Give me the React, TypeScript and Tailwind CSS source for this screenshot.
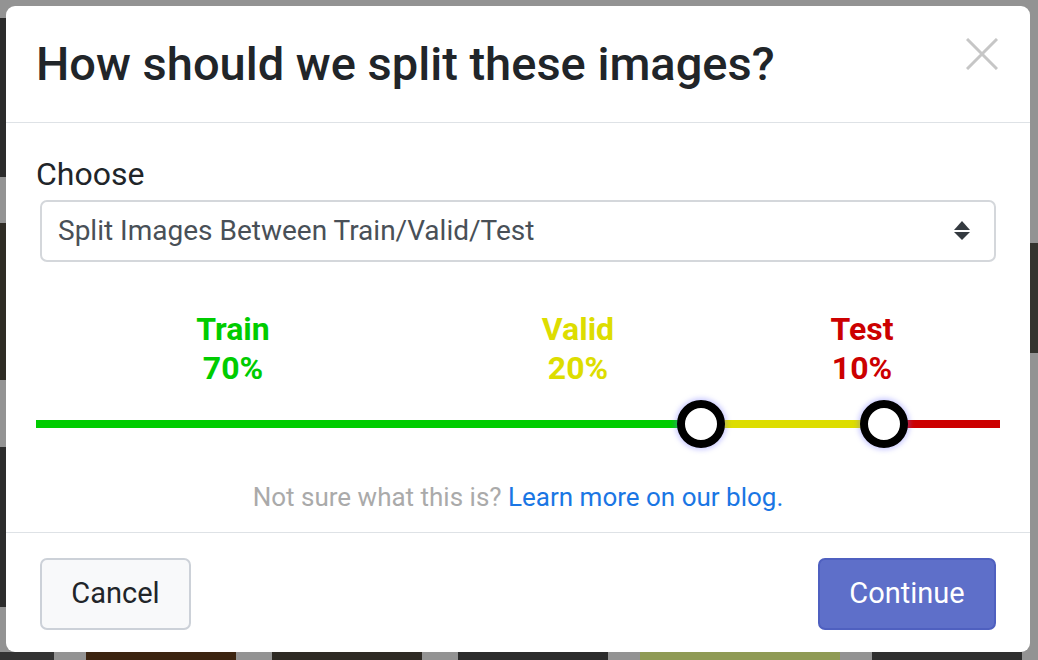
import React from "react";

const font = { fontFamily: "Roboto, 'Noto Sans', Arial, sans-serif" };

function Tile({ w, h, c, mt = 0 }: { w: number; h: number; c: string; mt?: number }) {
  return <div className="shrink-0" style={{ width: w, height: h, background: c, marginTop: mt }} />;
}

function Background() {
  return (
    <div className="flex flex-col w-full h-full">
      <div className="flex gap-[36px] pt-[18px] h-[177px] ml-[-140px]">
        <Tile w={146} h={159} c="#2b2b2b" />
        <Tile w={300} h={159} c="#3a3a3a" />
        <Tile w={300} h={159} c="#333" />
        <Tile w={300} h={159} c="#2e2e2e" />
      </div>
      <div className="flex gap-[36px] mt-[46px] h-[230px] ml-[-100px] items-start">
        <Tile w={106} h={157} c="#2f2c25" />
        <Tile w={300} h={157} c="#333" />
        <Tile w={300} h={157} c="#333" />
        <Tile w={360} h={110} c="#34332e" mt={20} />
      </div>
      <div className="flex gap-[36px] mt-[-6px] ml-[-100px] items-start">
        <Tile w={106} h={160} c="#2c2c2c" />
      </div>
      <div className="flex mt-auto h-[8px]">
        <Tile w={54} h={8} c="#333" />
        <div className="w-[32px]" />
        <Tile w={150} h={8} c="#3c2410" />
        <div className="w-[36px]" />
        <Tile w={150} h={8} c="#2e2a24" />
        <div className="w-[36px]" />
        <Tile w={150} h={8} c="#2c2c2c" />
        <div className="w-[32px]" />
        <Tile w={200} h={8} c="#8f9a55" />
        <div className="w-[32px]" />
        <Tile w={150} h={8} c="#2f2f2f" />
      </div>
    </div>
  );
}

function Handle({ left }: { left: number }) {
  return (
    <div
      className="absolute top-0 w-[48px] h-[48px] rounded-full bg-white border-[8px] border-black shadow-[0_0_5px_2px_rgba(110,110,255,0.35)]"
      style={{ left: left - 24 }}
    />
  );
}

export default function App() {
  return (
    <div className="relative w-[1038px] h-[660px] overflow-hidden bg-[#939393]" style={font}>
      <Background />
      <div className="absolute left-[6px] top-[6px] w-[1024px] h-[646px] bg-white rounded-[9px] flex flex-col">
        {/* Header */}
        <div className="flex justify-between items-start pl-[30px] pr-[32px] pt-[30px] h-[117px] border-b border-[#dee2e6]">
          <h1 className="text-[47px] leading-[56px] font-medium text-[#212529]">
            How should we split these images?
          </h1>
          <svg width="32" height="32" viewBox="0 0 32 32" className="mt-[2px]">
            <path d="M1 1 L31 31 M31 1 L1 31" stroke="#c6c6c6" strokeWidth="3" strokeLinecap="butt" />
          </svg>
        </div>

        {/* Body */}
        <div className="px-[30px] pt-[27px] pb-[15px] flex flex-col border-b border-[#dee2e6]">
          <div className="text-[32px] leading-[48px] text-[#212529]">Choose</div>
          <div className="mx-[4px] mt-[2px] h-[62px] border-[2px] border-[#d4d7db] rounded-[7px] flex items-center justify-between pl-[16px] pr-[23px]">
            <span className="text-[28px] text-[#495057]">Split Images Between Train/Valid/Test</span>
            <svg width="18" height="22" viewBox="0 0 18 22">
              <path d="M1 10 L9 1 L17 10 Z" fill="#343a40" />
              <path d="M1 12 L17 12 L9 20 Z" fill="#343a40" />
            </svg>
          </div>

          <div className="mt-[48px] flex text-[32px] leading-[39px] font-bold text-center">
            <div className="w-[394px] text-[#00cc00]">
              <div>Train</div>
              <div>70%</div>
            </div>
            <div className="w-[296px] text-[#dddd00]">
              <div>Valid</div>
              <div>20%</div>
            </div>
            <div className="w-[272px] text-[#cc0000]">
              <div>Test</div>
              <div>10%</div>
            </div>
          </div>

          <div className="relative mt-[12px] h-[48px] flex items-center">
            <div className="flex w-full h-[8px]">
              <div className="w-[665px] bg-[#00cc00]" />
              <div className="w-[183px] bg-[#dddd00]" />
              <div className="flex-1 bg-[#cc0000]" />
            </div>
            <Handle left={665} />
            <Handle left={848} />
          </div>

          <div className="mt-[30px] text-center text-[26px] leading-[39px] text-[#aaaaaa]">
            Not sure what this is? <span className="text-[#1a76e4]">Learn more on our blog.</span>
          </div>
        </div>

        {/* Footer */}
        <div className="flex justify-between items-start px-[34px] pt-[25px]">
          <button className="w-[151px] h-[72px] rounded-[7px] bg-[#f8f9fa] border-[2px] border-[#ccd1d8] text-[29px] text-[#212529]">
            Cancel
          </button>
          <button className="w-[178px] h-[72px] rounded-[7px] bg-[#5e6fc9] border-[2px] border-[#4f60c0] text-[29px] text-white">
            Continue
          </button>
        </div>
      </div>
    </div>
  );
}
